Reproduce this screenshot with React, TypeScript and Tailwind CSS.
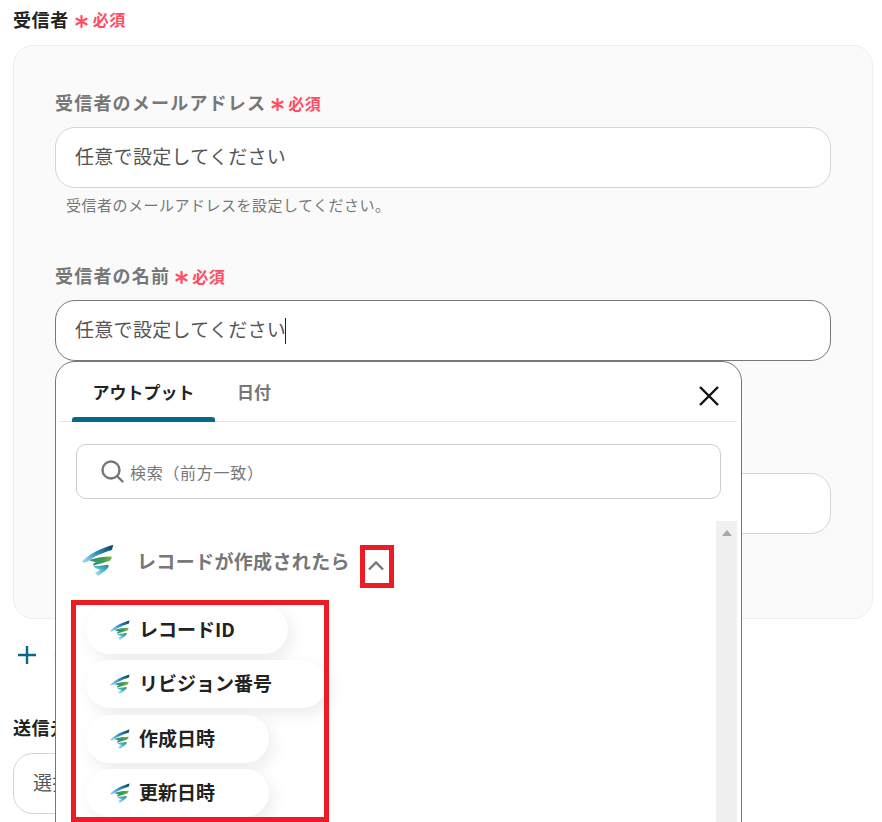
function Logo({ size, className = "" }: { size: number; className?: string }) {
  const id = "g" + size;
  return (
    <svg width={size} height={size} viewBox="0 0 92 92" className={className}>
      <defs>
        <linearGradient id={id + "a"} x1="0" y1="0.6" x2="1" y2="0.2">
          <stop offset="0" stopColor="#8fd0ee" />
          <stop offset="0.45" stopColor="#2f8fbf" />
          <stop offset="1" stopColor="#0b4a66" />
        </linearGradient>
        <linearGradient id={id + "b"} x1="0" y1="0" x2="1" y2="0">
          <stop offset="0" stopColor="#2f8f8a" />
          <stop offset="0.6" stopColor="#3f9a50" />
          <stop offset="1" stopColor="#7cb64a" />
        </linearGradient>
        <linearGradient id={id + "c"} x1="0.2" y1="1" x2="0.8" y2="0">
          <stop offset="0" stopColor="#b5e4f2" />
          <stop offset="0.6" stopColor="#4fb2d0" />
          <stop offset="1" stopColor="#2f8f80" />
        </linearGradient>
      </defs>
      <path d="M0 50 C20 28 60 10 90 2 L86 17 C60 24 34 36 16 50 C10 54 4 54 0 50 Z" fill={`url(#${id}a)`} />
      <path d="M20 46 C42 39 62 36 85 36 C86 40 85 45 80 48 C64 53 50 57 34 62 C30 58 34 54 42 52 C36 52 28 50 20 46 Z" fill={`url(#${id}b)`} />
      <path d="M32 62 C46 65 60 61 76 60 C78 64 76 69 70 74 C62 81 54 87 46 92 L37 83 C44 81 49 77 53 74 C44 73 36 69 32 62 Z" fill={`url(#${id}c)`} />
    </svg>
  );
}

function Required({ tight = false }: { tight?: boolean }) {
  return (
    <span className={`${tight ? "ml-[5px]" : "ml-[6px]"} inline-flex items-center text-[#ff4d63]`}>
      <svg width="13" height="13" viewBox="0 0 13 13" className="mt-[4px]" stroke="currentColor" strokeWidth="2.2" strokeLinecap="round">
        <path d="M6.5 1V12M1.5 3.7L11.5 9.3M11.5 3.7L1.5 9.3" />
      </svg>
      <span className={`${tight ? "ml-[4px]" : "ml-[5px]"} text-[16px] tracking-[0.5px] font-bold`}>必須</span>
    </span>
  );
}

function Pill({ label, w }: { label: string; w: string }) {
  return (
    <div className={`${w} flex h-[48px] shrink-0 items-center rounded-[24px] bg-white pl-[24px] shadow-[4px_6px_16px_rgba(0,0,0,0.08)]`}>
      <Logo size={20} />
      <span className="ml-[9px] pb-[2px] text-[19px] font-bold text-[#222]">{label}</span>
    </div>
  );
}

export default function App() {
  return (
    <div
      className="relative h-[822px] w-[882px] overflow-hidden bg-white"
      style={{ fontFamily: '"Noto Sans CJK JP", "Noto Sans", sans-serif' }}
    >
      <div className="px-[13px] pt-[6px]">
        <div className="flex h-[28px] items-center pb-[2px] text-[18px] font-bold tracking-[0.6px] text-[#222]">
          受信者
          <Required />
        </div>
        <div className="mt-[11px] h-[574px] w-[860px] rounded-[20px] border border-[#eeeeee] bg-[#fafafa] px-[41px] pt-[44px]">
          <div className="flex h-[28px] items-center pb-[3px] text-[18px] font-bold tracking-[1.2px] text-[#777]">
            受信者のメールアドレス
            <Required tight />
          </div>
          <div className="mt-[9px] flex h-[61px] w-[776px] items-center rounded-[20px] border border-[#d3d5da] bg-white pb-[2px] pl-[19px] text-[19px] tracking-[0.3px] text-[#555]">
            任意で設定してください
          </div>
          <div className="mt-[7px] pl-[11px] text-[15px] leading-[20px] tracking-[0.5px] text-[#777]">
            受信者のメールアドレスを設定してください。
          </div>
          <div className="mt-[48px] flex h-[28px] items-center pb-[3px] text-[18px] font-bold tracking-[1.2px] text-[#777]">
            受信者の名前
            <Required tight />
          </div>
          <div className="mt-[9px] flex h-[61px] w-[776px] items-center rounded-[20px] border border-[#777] bg-white pb-[2px] pl-[19px] text-[19px] tracking-[0.3px] text-[#555]">
            任意で設定してください
            <span className="ml-[-1px] mt-[2px] h-[26px] w-px bg-[#222]" />
          </div>
          <div className="mt-[112px] h-[61px] w-[776px] rounded-[20px] border border-[#d3d5da] bg-white" />
        </div>
        <div className="mt-[18px] flex h-[36px] items-center pl-[5px] text-[#07698a]">
          <svg width="18" height="18" viewBox="0 0 18 18" stroke="currentColor" strokeWidth="2.4">
            <path d="M9 0V18M0 9H18" />
          </svg>
          <span className="ml-[18px] text-[16px] font-bold">受信者を追加</span>
        </div>
        <div className="mt-[41px] flex h-[28px] items-center pb-[2px] text-[18px] font-bold tracking-[0.6px] text-[#222]">
          送信元
        </div>
        <div className="mt-[11px] flex h-[61px] w-[400px] items-center rounded-[20px] border border-[#d3d5da] bg-white pb-[2px] pl-[19px] text-[19px] tracking-[0.3px] text-[#555]">
          選択
        </div>
      </div>

      {/* popover */}
      <div className="absolute left-[55px] top-[361px] h-[480px] w-[687px] rounded-t-[20px] border border-[#777] bg-white">
        <div className="mx-[4px] flex h-[60px] items-stretch border-b border-[#e5e5e5] pl-[12px]">
          <div className="relative flex w-[143px] items-center justify-center text-[17px] font-bold text-[#222]">
            アウトプット
            <span className="absolute bottom-[-1px] left-0 right-0 h-[5px] rounded-t-[3px] bg-[#07698a]" />
          </div>
          <div className="ml-[22px] flex items-center text-[17px] font-bold text-[#777]">日付</div>
          <svg width="20" height="20" viewBox="0 0 20 20" className="ml-auto mr-[18px] mt-[24px]" stroke="#111" strokeWidth="2.4">
            <path d="M1 1L19 19M19 1L1 19" />
          </svg>
        </div>
        <div className="ml-[20px] mt-[22px] flex h-[55px] w-[645px] items-center rounded-[10px] border border-[#ccc] pl-[24px] text-[16px] tracking-[0.7px] text-[#777]">
          <svg width="23" height="23" viewBox="0 0 23 23" fill="none" stroke="#777" strokeWidth="2.4" strokeLinecap="round">
            <circle cx="10" cy="10" r="8.5" />
            <path d="M16.5 16.5L21.5 21.5" />
          </svg>
          <span className="ml-[6px]">検索（前方一致）</span>
        </div>
        <div className="mt-[22px] flex">
          <div className="w-[660px] shrink-0">
            <div className="flex h-[85px] items-start pl-[26px] pt-[23px]">
              <Logo size={32} />
              <span className="ml-[23px] mt-[3px] text-[19px] font-bold tracking-[0.35px] text-[#777]">レコードが作成されたら</span>
              <svg width="16" height="10" viewBox="0 0 16 10" className="ml-[18px] mt-[17px]" fill="none" stroke="#777" strokeWidth="2.4">
                <path d="M1 8.5L8 1.5L15 8.5" />
              </svg>
            </div>
            <div className="flex flex-col gap-[6.4px] pl-[30px]">
              <Pill label="レコードID" w="w-[202px]" />
              <Pill label="リビジョン番号" w="w-[241px]" />
              <Pill label="作成日時" w="w-[183px]" />
              <Pill label="更新日時" w="w-[183px]" />
            </div>
          </div>
          <div className="h-[320px] w-[21px] bg-[#f0f0f0] pt-[9px]">
            <div className="mx-auto h-0 w-0 border-x-[5px] border-b-[6px] border-x-transparent border-b-[#a8a8a8]" />
          </div>
        </div>
      </div>

      {/* red annotations */}
      <div className="absolute left-[360px] top-[545px] h-[43px] w-[34px] border-[5px] border-[#ed1c24]" />
      <div className="absolute left-[71px] top-[600px] h-[222px] w-[258px] border-[5px] border-[#ed1c24]" />
    </div>
  );
}
